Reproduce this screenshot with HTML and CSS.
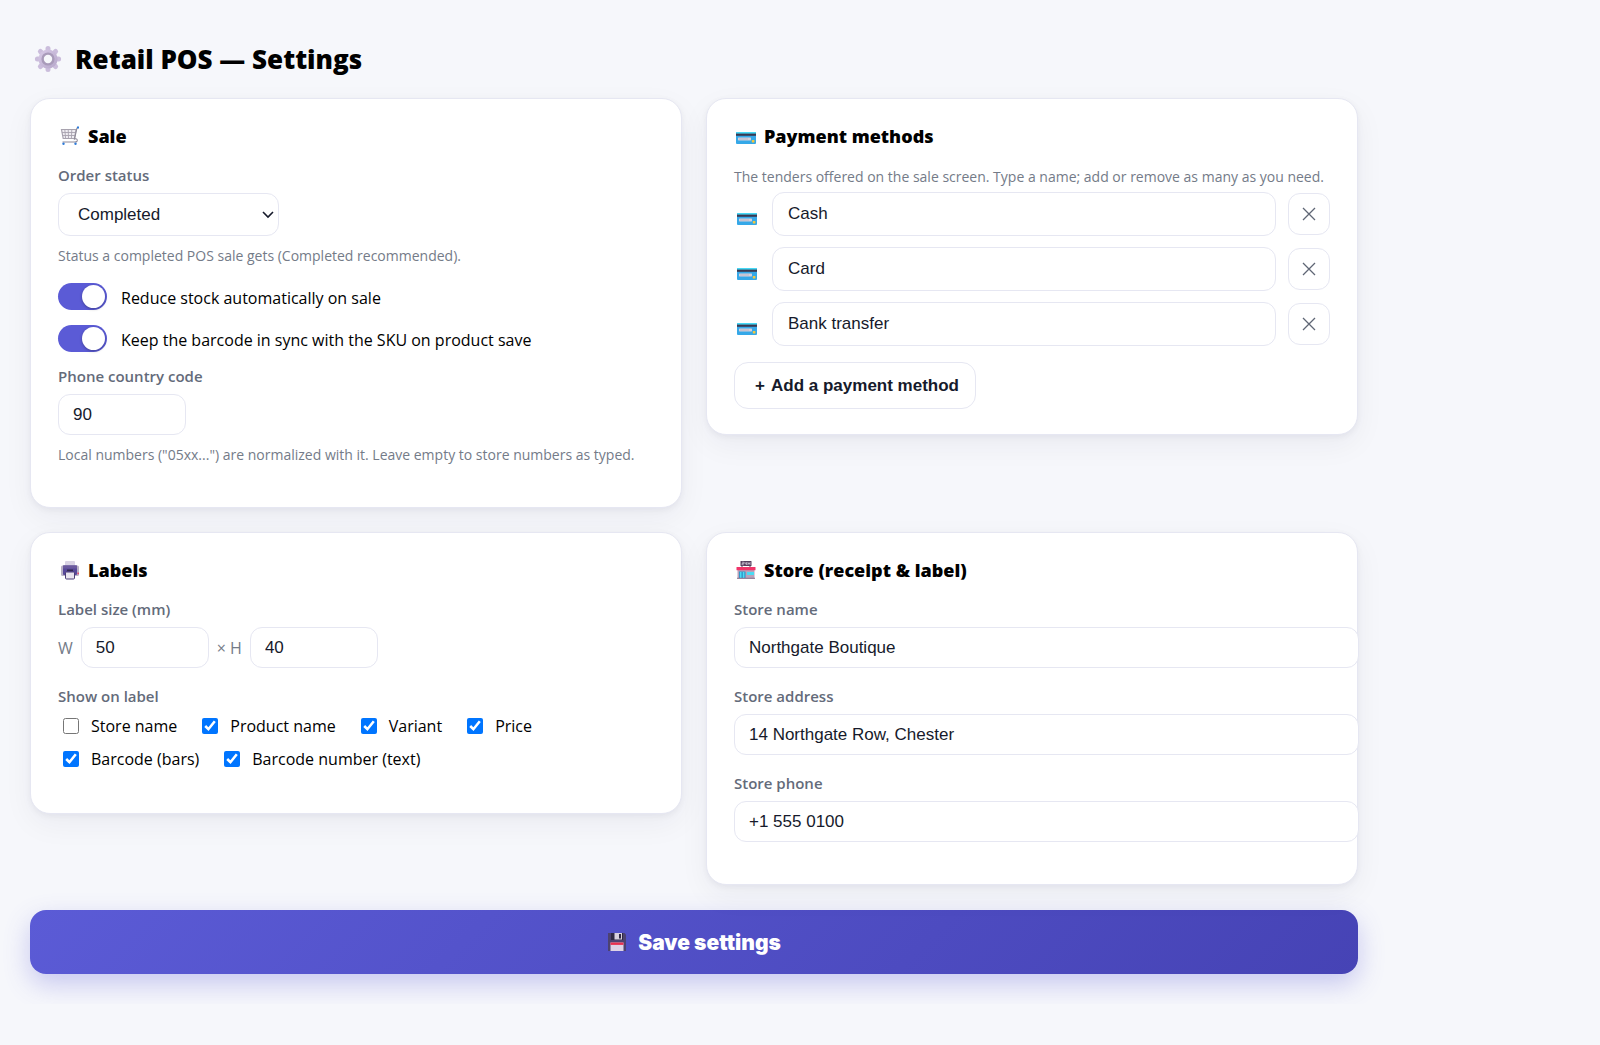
FILE: index.html
```html
<!DOCTYPE html>
<html lang="en">
<head>
  <meta charset="UTF-8" />
  <meta name="viewport" content="width=device-width, initial-scale=1" />
  <title>Retail POS — Settings</title>
  <link rel="stylesheet" href="styles.css">
</head>
<body>

<!-- Shared icons -->
<svg class="sprite" aria-hidden="true">
  <symbol id="icon-card" viewBox="0 0 20 14">
    <rect y="1" width="20" height="12" rx="1" fill="#35a8e8"/>
    <rect y="1" width="20" height="2" rx="1" fill="#45d8f5"/>
    <rect y="2.6" width="20" height="2.2" fill="#3b3850"/>
    <rect x="2" y="6.6" width="13" height="2.8" rx=".6" fill="#d5d0dc"/>
    <rect x="3" y="7.5" width="9" height="1" fill="#bbb6c6"/>
    <rect x="15.8" y="9" width="2.6" height="2.4" rx=".5" fill="#f6c73b"/>
  </symbol>
  <symbol id="icon-close" viewBox="0 0 14 14">
    <path d="M1 1l12 12M13 1L1 13" fill="none" stroke="#5f6675" stroke-width="1.3"/>
  </symbol>
</svg>

<form class="settings" id="settings">
  <h1>
    <svg class="gear" viewBox="0 0 28 28" aria-hidden="true">
      <defs>
        <linearGradient id="gear-fill" x1="0" y1="0" x2="1" y2="1">
          <stop offset="0" stop-color="#d9cbe8"/>
          <stop offset="1" stop-color="#b5a6c9"/>
        </linearGradient>
      </defs>
      <path d="M14 3.4v21.2M3.4 14h21.2M6.4 6.4l15.2 15.2M21.6 6.4L6.4 21.6" stroke="#cbbddc" stroke-width="5" stroke-linecap="round"/>
      <circle cx="14" cy="14" r="9.6" fill="url(#gear-fill)"/>
      <circle cx="14" cy="14" r="5.4" fill="#f6f7fb" stroke="#a99bba" stroke-width="2.4"/>
    </svg>
    Retail POS — Settings
  </h1>

  <div class="grid">
    <!-- Sale -->
    <section class="card">
      <h2>
        <svg viewBox="0 0 20 20" aria-hidden="true">
          <path d="M1.5 3.5h14.6l-1.7 9H3.2z" fill="#efedf2" stroke="#a8a3af" stroke-width="1.2"/>
          <path d="M4.8 3.5l.8 9M8.2 3.5l.3 9M11.8 3.5l-.4 9M1.9 6.5h13.6M2.5 9.5h12.4" fill="none" stroke="#a8a3af" stroke-width=".9"/>
          <path d="M18.5 1.6l-1.6.5-2.4 11c1.8-1 3.4.4 2.6 2-.6 1-1.6.9-3 .9H2.5" fill="none" stroke="#8f8a98" stroke-width="1.1"/>
          <path d="M17 1.5h2" stroke="#2f7bd8" stroke-width="2"/>
          <circle cx="3.5" cy="17.8" r="1.2" fill="#2f7bd8"/>
          <circle cx="15.5" cy="17.8" r="1.2" fill="#2f7bd8"/>
        </svg>
        Sale
      </h2>
      <div class="field">
        <label class="title" for="status">Order status</label>
        <select id="status">
          <option selected>Completed</option>
          <option>Processing</option>
          <option>On hold</option>
        </select>
        <p class="hint">Status a completed POS sale gets (Completed recommended).</p>
      </div>
      <div class="toggles">
        <label class="toggle"><input type="checkbox" checked> <span>Reduce stock automatically on sale</span></label>
        <label class="toggle"><input type="checkbox" checked> <span>Keep the barcode in sync with the SKU on product save</span></label>
      </div>
      <div class="field">
        <label class="title" for="country">Phone country code</label>
        <input class="small" type="text" id="country" value="90">
        <p class="hint">Local numbers ("05xx...") are normalized with it. Leave empty to store numbers as typed.</p>
      </div>
    </section>

    <!-- Payment methods -->
    <section class="card">
      <h2><svg viewBox="0 0 20 20" aria-hidden="true"><use href="#icon-card" y="5" width="20" height="14"/></svg> Payment methods</h2>
      <p class="intro">The tenders offered on the sale screen. Type a name; add or remove as many as you need.</p>
      <div class="methods" id="methods">
        <div class="method">
          <svg class="card-icon" aria-hidden="true"><use href="#icon-card"/></svg>
          <input type="text" aria-label="Payment method" value="Cash">
          <button type="button" class="remove" aria-label="Remove"><svg aria-hidden="true"><use href="#icon-close"/></svg></button>
        </div>
        <div class="method">
          <svg class="card-icon" aria-hidden="true"><use href="#icon-card"/></svg>
          <input type="text" aria-label="Payment method" value="Card">
          <button type="button" class="remove" aria-label="Remove"><svg aria-hidden="true"><use href="#icon-close"/></svg></button>
        </div>
        <div class="method">
          <svg class="card-icon" aria-hidden="true"><use href="#icon-card"/></svg>
          <input type="text" aria-label="Payment method" value="Bank transfer">
          <button type="button" class="remove" aria-label="Remove"><svg aria-hidden="true"><use href="#icon-close"/></svg></button>
        </div>
      </div>
      <button type="button" class="add" id="add"><span>+</span> Add a payment method</button>
    </section>

    <!-- Labels -->
    <section class="card">
      <h2>
        <svg viewBox="0 0 20 20" aria-hidden="true">
          <rect x="5" y="1" width="10" height="7" rx="1" fill="#d9d3e4"/>
          <rect x="1" y="5.5" width="18" height="10.5" rx="1.5" fill="#b9b1c6"/>
          <rect x="3" y="5.5" width="14" height="9.5" rx="1" fill="#58489a"/>
          <rect x="3" y="5.5" width="14" height="3" fill="#6b5a9e"/>
          <rect x="7" y="9.5" width="6" height="1.6" fill="#33284f"/>
          <rect x="5.5" y="12" width="9" height="7" rx="1" fill="#e8e3ee" stroke="#4b3d76" stroke-width="1"/>
          <rect x="17.4" y="12.6" width="1.6" height="1.6" fill="#e8476a"/>
        </svg>
        Labels
      </h2>
      <div class="field">
        <label class="title" for="width">Label size (mm)</label>
        <div class="size">
          <label for="width">W</label>
          <input class="small" type="text" id="width" value="50">
          <label for="height">× H</label>
          <input class="small" type="text" id="height" value="40">
        </div>
      </div>
      <div class="field">
        <div class="title">Show on label</div>
        <div class="checks">
          <label><input type="checkbox"> Store name</label>
          <label><input type="checkbox" checked> Product name</label>
          <label><input type="checkbox" checked> Variant</label>
          <label><input type="checkbox" checked> Price</label>
          <label><input type="checkbox" checked> Barcode (bars)</label>
          <label><input type="checkbox" checked> Barcode number (text)</label>
        </div>
      </div>
    </section>

    <!-- Store -->
    <section class="card">
      <h2>
        <svg viewBox="0 0 20 20" aria-hidden="true">
          <rect x="4.5" y="1" width="11" height="5" rx=".6" fill="#55405f"/>
          <path d="M6 2.2h1.8v1.3H6v1.3h1.8M9 2v1.8h1.6M10.6 2v3M12 2v3M14 2v3M12 3.5h2" fill="none" stroke="#e8e0ee" stroke-width=".6"/>
          <path d="M6 5v3M14 5v3" stroke="#55405f" stroke-width="1"/>
          <rect x="1.5" y="9" width="17" height="9.5" fill="#b9a3bb"/>
          <rect x=".5" y="7" width="19" height="3.2" rx=".5" fill="#f0356a"/>
          <rect x="3" y="11.5" width="6.5" height="6.5" fill="#2f8fc4"/>
          <path d="M4.7 12v6M7.6 12v6" stroke="#49dcf5" stroke-width="1.6"/>
          <rect x="11" y="12" width="7" height="3" fill="#49dcf5"/>
          <rect x="1" y="17.8" width="18" height="1" fill="#85708c"/>
        </svg>
        Store (receipt &amp; label)
      </h2>
      <div class="field">
        <label class="title" for="store-name">Store name</label>
        <input class="wide" type="text" id="store-name" value="Northgate Boutique">
      </div>
      <div class="field">
        <label class="title" for="store-address">Store address</label>
        <input class="wide" type="text" id="store-address" value="14 Northgate Row, Chester">
      </div>
      <div class="field">
        <label class="title" for="store-phone">Store phone</label>
        <input class="wide" type="text" id="store-phone" value="+1 555 0100">
      </div>
    </section>
  </div>

  <button type="submit" class="save">
    <svg viewBox="0 0 20 20" aria-hidden="true">
      <path d="M1 1h16.5L19 2.5V19H1z" fill="#4c4270"/>
      <rect x="4" y="1" width="12" height="7" fill="#2f2845"/>
      <rect x="7.5" y="1" width="7.5" height="6.5" fill="#d8d0df"/>
      <rect x="12" y="2" width="2" height="4.5" fill="#2f2845"/>
      <rect x="3.5" y="10.5" width="13" height="8.5" fill="#ded3e6"/>
      <rect x="3.5" y="10.5" width="13" height="2.4" fill="#e8304f"/>
    </svg>
    Save settings
  </button>
</form>

<script>
  const methods = document.getElementById("methods");

  methods.addEventListener("click", e => {
    const btn = e.target.closest(".remove");
    if (btn) btn.parentElement.remove();
  });

  const template = methods.querySelector(".method").cloneNode(true);

  document.getElementById("add").addEventListener("click", () => {
    const row = template.cloneNode(true);
    row.querySelector("input").value = "";
    methods.appendChild(row);
    row.querySelector("input").focus();
  });

  document.getElementById("settings").addEventListener("submit", e => e.preventDefault());
</script>

</body>
</html>
```
FILE: styles.css
```css
body {
  margin: 0;
  padding: 30px;
  font-family: 'Segoe UI', 'Open Sans', sans-serif;
  font-size: 16px;
  background-color: #f6f7fb;
  color: #000;
}
.sprite {
  display: none;
}
.settings {
  max-width: 1328px;
}
h1 {
  display: flex;
  align-items: center;
  gap: 13px;
  margin: 10px 0 20px;
  padding-left: 4px;
  font-size: 26px;
  font-weight: 800;
  line-height: 38px;
}
.gear {
  width: 28px;
  height: 28px;
}
.grid {
  display: grid;
  grid-template-columns: 1fr 1fr;
  gap: 24px;
  align-items: start;
}
.card {
  min-width: 0;
  background: white;
  border: 1px solid #e6e7f2;
  border-radius: 20px;
  padding: 25px 27px;
  box-shadow: 0 2px 6px rgba(20,24,50,0.05), 0 10px 30px rgba(20,24,50,0.05);
}
h2 {
  display: flex;
  align-items: center;
  gap: 8px;
  margin: 0 0 16px;
  padding-left: 2px;
  font-size: 18px;
  font-weight: 800;
  line-height: 24px;
}
h2 svg,
.save svg {
  width: 20px;
  height: 20px;
}
.field {
  margin-bottom: 17px;
}
.title {
  display: block;
  margin-bottom: 6px;
  font-size: 15px;
  font-weight: 600;
  line-height: 23px;
  color: #646b7a;
}
.hint,
.intro {
  margin: 10px 0 0;
  font-size: 14px;
  line-height: 20px;
  color: #747b88;
}
.intro {
  margin: 0 0 2px;
  line-height: 26px;
}
input[type="text"],
select {
  display: block;
  box-sizing: border-box;
  height: 41px;
  padding: 0 14px;
  border: 1px solid #e6e7f2;
  border-radius: 12px;
  background: white;
  color: #161a2b;
  font-family: Arial, 'Liberation Sans', sans-serif;
  font-size: 17px;
}
select {
  appearance: none;
  width: 221px;
  height: 43px;
  padding-left: 19px;
  background: white url("data:image/svg+xml,%3Csvg xmlns='http://www.w3.org/2000/svg' width='12' height='8'%3E%3Cpath d='M1 1l5 5 5-5' fill='none' stroke='%23161a2b' stroke-width='1.6'/%3E%3C/svg%3E") no-repeat right 4px center;
}
.small {
  width: 128px;
}
/* runs through the card padding to its edge */
input.wide {
  width: calc(100% + 29px);
}

.toggles {
  display: grid;
  gap: 15px;
  margin-bottom: 13px;
}
.toggle {
  display: flex;
  align-items: center;
  gap: 14px;
  height: 27px;
}
.toggle span {
  padding-top: 2px;
}
.toggle input {
  appearance: none;
  width: 49px;
  height: 27px;
  margin: 0;
  padding: 2px;
  border-radius: 14px;
  background: #c9ccd8;
}
.toggle input::before {
  content: "";
  display: block;
  width: 23px;
  height: 23px;
  border-radius: 50%;
  background: white;
  box-shadow: 0 1px 3px rgba(0,0,0,0.3);
}
.toggle input:checked {
  background: #5b5bd6;
}
.toggle input:checked::before {
  margin-left: 22px;
}

.methods {
  display: grid;
  gap: 11px;
}
.method {
  display: flex;
  align-items: center;
  gap: 12px;
}
.method input[type="text"] {
  flex: 1;
  height: 44px;
  padding: 0 15px;
}
.card-icon {
  width: 20px;
  height: 14px;
  margin: 10px 3px 0;
}
.remove {
  display: flex;
  align-items: center;
  justify-content: center;
  width: 42px;
  height: 42px;
  padding: 0;
  border: 1px solid #e6e7f2;
  border-radius: 12px;
  background: white;
  cursor: pointer;
}
.remove svg {
  width: 14px;
  height: 14px;
}
.add {
  height: 47px;
  margin-top: 16px;
  padding: 0 16px 0 20px;
  border: 1px solid #e6e7f2;
  border-radius: 14px;
  background: white;
  color: #161a2b;
  font-family: Arial, 'Liberation Sans', sans-serif;
  font-size: 17px;
  font-weight: 700;
  cursor: pointer;
}
.add span {
  margin-right: 2px;
}

.size {
  display: flex;
  align-items: center;
  gap: 8px;
  color: #747b88;
}
.checks {
  display: flex;
  flex-wrap: wrap;
  gap: 9px 25px;
  max-width: 520px;
  padding-left: 5px;
}
.checks label {
  display: flex;
  align-items: center;
  gap: 12px;
  line-height: 24px;
}
.checks input {
  width: 16px;
  height: 16px;
  margin: 0;
}

.save {
  display: flex;
  align-items: center;
  justify-content: center;
  gap: 11px;
  width: 100%;
  height: 64px;
  margin-top: 25px;
  border: none;
  border-radius: 16px;
  background: linear-gradient(135deg, #5b5bd6, #4643b5);
  box-shadow: 0 10px 26px rgba(91,91,214,0.3);
  color: white;
  font-family: 'Arial Black', Inter, sans-serif;
  font-size: 21px;
  font-weight: 900;
  cursor: pointer;
}

@media (max-width: 900px) {
  .grid {
    grid-template-columns: 1fr;
  }
}
```
